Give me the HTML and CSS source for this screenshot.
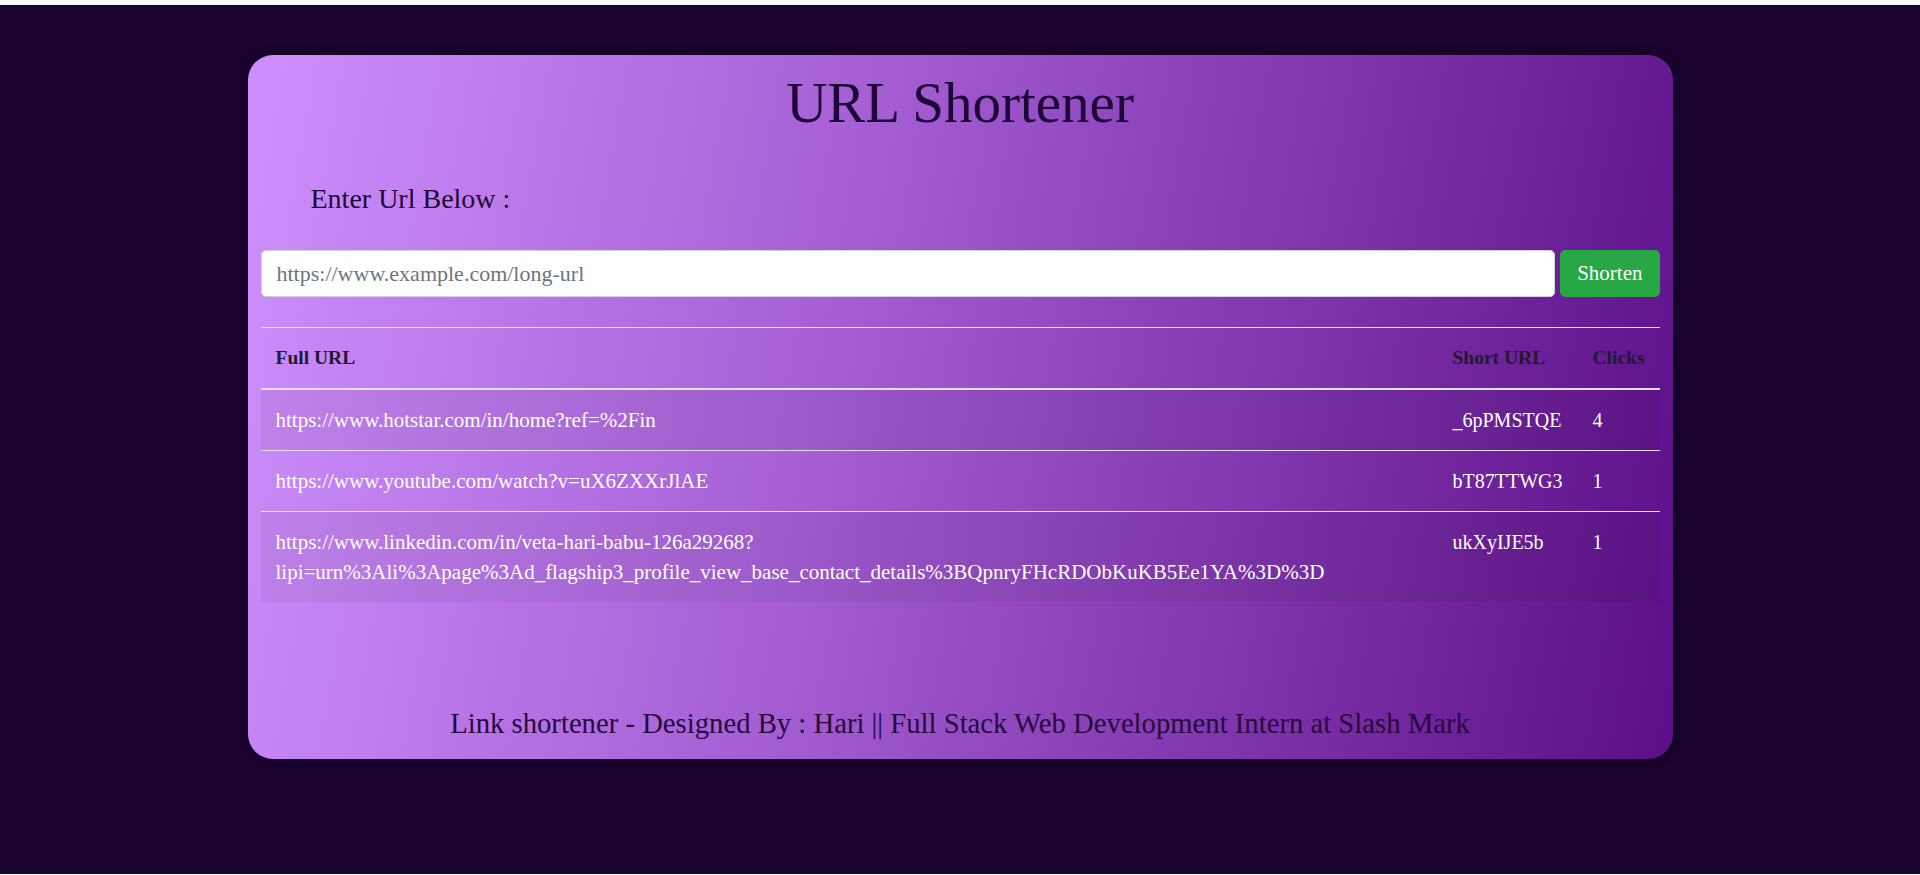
FILE: index.html
```html
<!DOCTYPE html>
<html lang="en">
<head>
<meta charset="utf-8">
<title>URL Shortener</title>
<link rel="stylesheet" href="styles.css">
</head>
<body>
<div class="page">
  <main class="card">
    <h1 class="title">URL Shortener</h1>
    <form class="shorten-form">
      <label class="url-label" for="fullUrl">Enter Url Below :</label>
      <div class="input-row">
        <input id="fullUrl" class="url-input" type="url" placeholder="https://www.example.com/long-url">
        <button type="button" class="btn-shorten">Shorten</button>
      </div>
    </form>
    <table class="links">
      <thead>
        <tr><th>Full URL</th><th>Short URL</th><th>Clicks</th></tr>
      </thead>
      <tbody>
        <tr>
          <td class="full">https://www.hotstar.com/in/home?ref=%2Fin</td>
          <td class="short">_6pPMSTQE</td>
          <td class="clicks">4</td>
        </tr>
        <tr>
          <td class="full">https://www.youtube.com/watch?v=uX6ZXXrJlAE</td>
          <td class="short">bT87TTWG3</td>
          <td class="clicks">1</td>
        </tr>
        <tr>
          <td class="full">https://www.linkedin.com/in/veta-hari-babu-126a29268?lipi=urn%3Ali%3Apage%3Ad_flagship3_profile_view_base_contact_details%3BQpnryFHcRDObKuKB5Ee1YA%3D%3D</td>
          <td class="short">ukXyIJE5b</td>
          <td class="clicks">1</td>
        </tr>
      </tbody>
    </table>
    <footer class="credit">Link shortener - Designed By : Hari || Full Stack Web Development Intern at Slash Mark</footer>
  </main>
</div>
</body>
</html>
```
FILE: styles.css
```css
html, body {
  margin: 0;
  padding: 0;
}
body {
  background: #f3f9f4;
  font-family: "Liberation Serif", "Times New Roman", serif;
}
.page {
  margin-top: 5px;
  height: 869px;
  background: #1b0330;
  padding-top: 50px;
  box-sizing: border-box;
}
.card {
  box-sizing: border-box;
  width: 1425px;
  height: 704px;
  margin: 0 auto;
  padding: 15px 13px 19px;
  border-radius: 25px;
  background: linear-gradient(100deg, #ce8ffc 0%, #a65fd5 40%, #5b0e87 100%);
  box-shadow: 0 0 10px rgba(0, 0, 0, 0.45);
  display: flex;
  flex-direction: column;
}
.title {
  margin: 0;
  text-align: center;
  font-weight: normal;
  font-size: 57px;
  line-height: 66px;
  color: #1d0637;
}
.shorten-form {
  display: flex;
  flex-direction: column;
}
.url-label {
  margin: 46px 0 0 50px;
  font-size: 28px;
  line-height: 34px;
  color: #1c0836;
}
.input-row {
  margin-top: 34px;
  display: flex;
  gap: 5px;
}
.url-input {
  flex: 1;
  height: 47px;
  box-sizing: border-box;
  border: 1px solid #ced4da;
  border-radius: 5px;
  padding: 0 15px;
  font-family: inherit;
  font-size: 22px;
  color: #495057;
  background: #fff;
  outline: none;
}
.url-input::placeholder {
  color: #6c757d;
}
.btn-shorten {
  height: 47px;
  box-sizing: border-box;
  padding: 0 16px;
  border: 1px solid #28a745;
  border-radius: 5px;
  background: #28a745;
  color: #fff;
  font-family: inherit;
  font-size: 21px;
}
.links {
  width: 100%;
  margin-top: 30px;
  border-collapse: collapse;
}
.links th,
.links td {
  padding: 15px;
  line-height: 30px;
  text-align: left;
  vertical-align: top;
  border-top: 1px solid #dee2e6;
}
.links thead th {
  border-bottom: 2px solid #dee2e6;
  font-size: 19.5px;
  font-weight: bold;
  color: #221a2c;
}
.links td {
  color: #fff;
  font-size: 20px;
}
.links td.full {
  font-size: 21px;
}
.links tbody tr:nth-child(odd) {
  background: rgba(0, 0, 0, 0.05);
}
.credit {
  margin-top: auto;
  text-align: center;
  font-size: 28.7px;
  line-height: 34px;
  color: #260a3c;
}
```
